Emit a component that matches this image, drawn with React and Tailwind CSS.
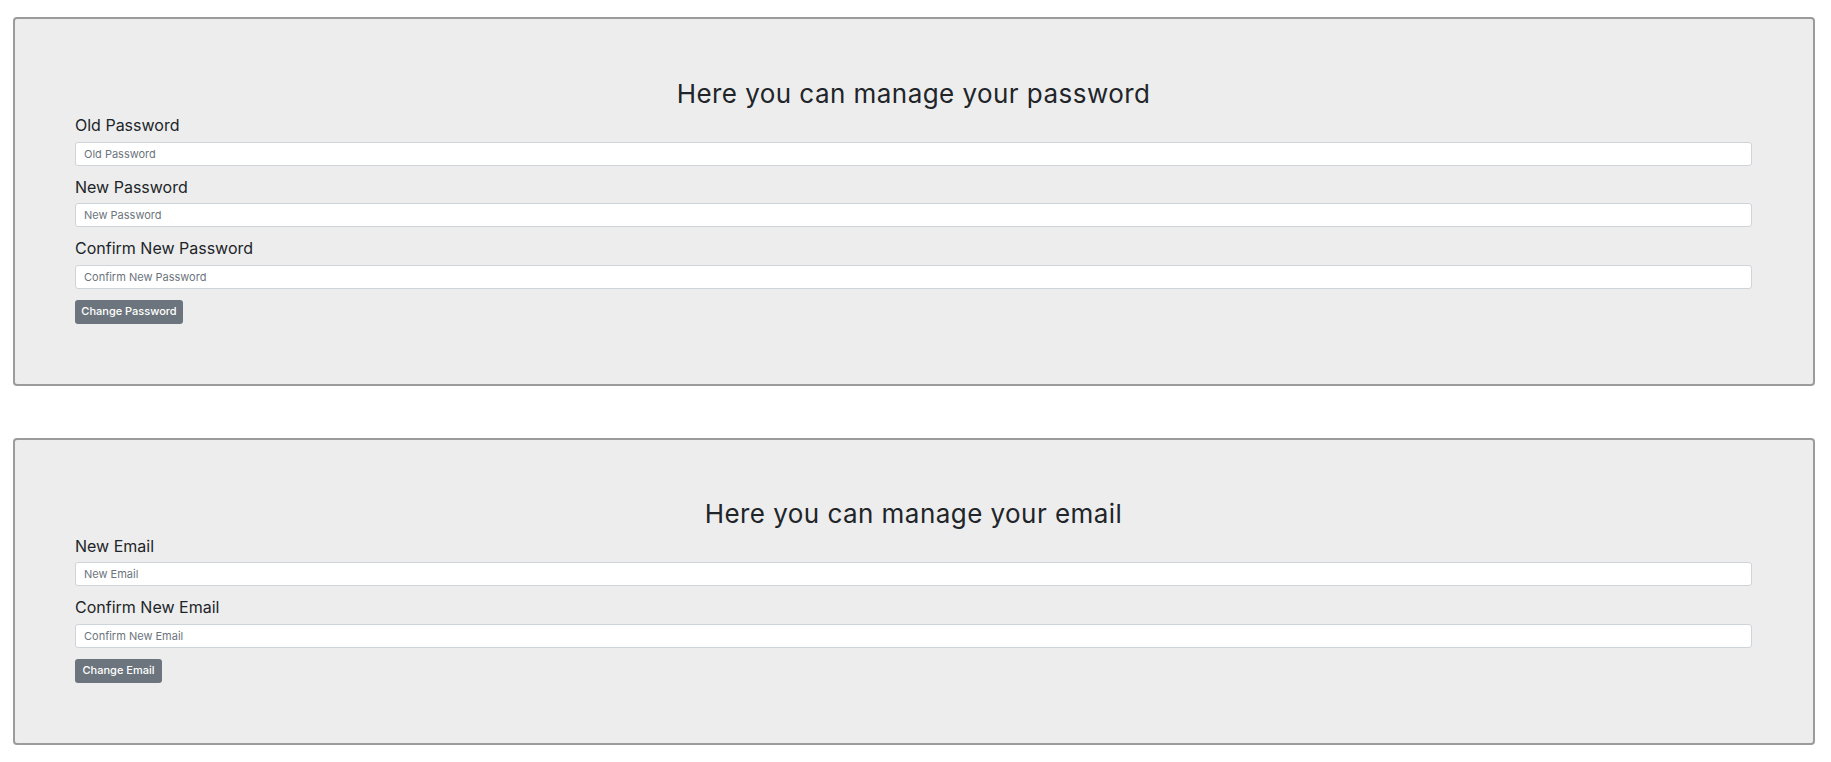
import React from "react";

const font = { fontFamily: "Inter, 'Open Sans', sans-serif" };

function Field({ label, first }) {
  return (
    <div className="flex flex-col">
      <label className={`text-[16px] leading-[24px] text-[#212529] mb-[4.5px] ${first ? "" : "mt-[9px]"}`}>
        {label}
      </label>
      <input
        type="text"
        placeholder={label}
        className="h-[24px] w-full rounded-[3px] border border-[#ced4da] bg-white px-[8px] text-[11px] text-[#212529] placeholder:text-[#6c757d] outline-none"
      />
    </div>
  );
}

function Card({ title, fields, button, buttonW }) {
  return (
    <div className="rounded-[4px] border-2 border-[#9b9b9b] bg-[#ededed] pl-[60px] pr-[61px] pt-[58.5px] pb-[60.5px]">
      <h3 className="text-center text-[26px] leading-[32px] tracking-[0.45px] text-[#212529] mb-[3.5px]">{title}</h3>
      {fields.map((f, i) => (
        <Field key={f} label={f} first={i === 0} />
      ))}
      <button
        className={`mt-[11px] h-[24px] ${buttonW} rounded-[3px] bg-[#6c757d] text-[11px] font-medium text-white`}
      >
        {button}
      </button>
    </div>
  );
}

export default function App() {
  return (
    <div style={font} className="min-h-[762px] bg-white pt-[17px] pl-[13px] pr-[16px]">
      <Card
        title="Here you can manage your password"
        fields={["Old Password", "New Password", "Confirm New Password"]}
        button="Change Password"
        buttonW="w-[108px]"
      />
      <div className="h-[51.5px]" />
      <Card
        title="Here you can manage your email"
        fields={["New Email", "Confirm New Email"]}
        button="Change Email"
        buttonW="w-[87px]"
      />
    </div>
  );
}
